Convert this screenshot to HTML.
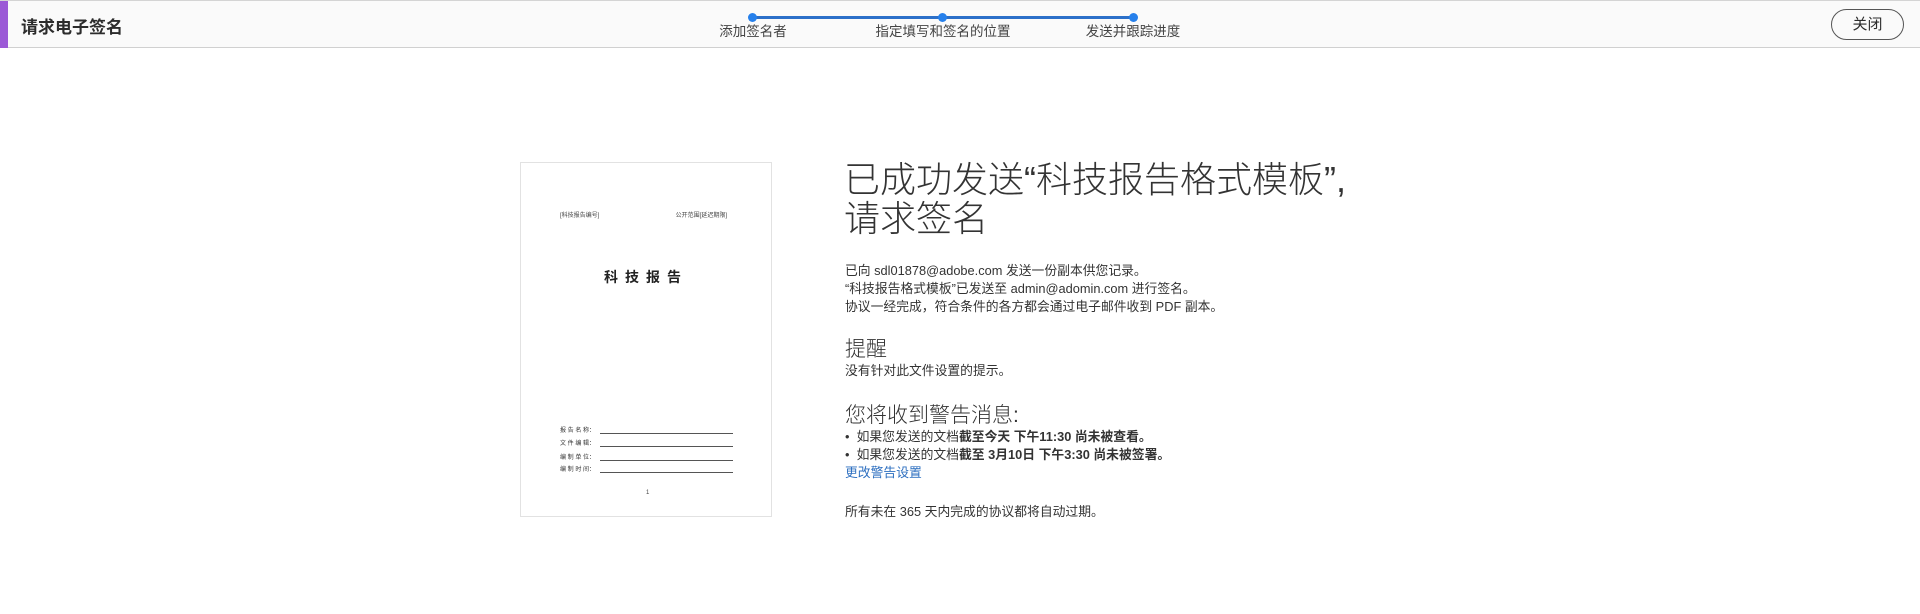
<!DOCTYPE html>
<html><head><meta charset="utf-8"><style>
*{margin:0;padding:0;box-sizing:border-box}
body{width:1920px;height:614px;background:#fff;font-family:"Liberation Sans","Noto Sans CJK SC",sans-serif;color:#333;position:relative;overflow:hidden}
.hdr{position:absolute;left:0;top:0;width:1920px;height:48px;background:#fafafa;border-top:1px solid #d4d4d4;border-bottom:1px solid #d0d0d0}
.bar{position:absolute;left:0;top:0;width:8px;height:47px;background:#9b59d6}
.ttl{position:absolute;left:21px;top:12px;font-size:17px;font-weight:bold;color:#2c2c2c}
.line{position:absolute;left:752px;top:15px;width:381px;height:3px;background:#2c70c9}
.dot{position:absolute;top:12px;width:9px;height:9px;border-radius:50%;background:#2680eb}
.lbl{position:absolute;top:19px;font-size:13.5px;color:#444;transform:translateX(-50%);white-space:nowrap}
.btn{position:absolute;left:1831px;top:8px;width:73px;height:31px;border:1.5px solid #555;border-radius:16px;font-size:15px;text-align:center;line-height:29px;color:#2c2c2c}
.doc{position:absolute;left:520px;top:162px;width:252px;height:355px;border:1px solid #e2e2e2;background:#fff}
.doc .s{position:absolute;font-size:6px;color:#444}
.doc .fl{position:absolute;left:39px;font-size:6px;color:#333;width:173px}
.doc .fl i{position:absolute;left:40px;right:0;bottom:0;border-bottom:1px solid #555}
.h1{position:absolute;left:844px;top:160px;font-size:36px;line-height:39px;font-weight:300;color:#333}
.p{position:absolute;left:845px;font-size:12.8px;line-height:18px;color:#333;white-space:nowrap}
.h2{position:absolute;left:845px;font-size:21px;font-weight:300;color:#333}
a{color:#2d6fc0;text-decoration:none}
</style></head><body>
<div class="hdr"><div class="bar"></div><div class="ttl">请求电子签名</div>
<div class="line"></div>
<div class="dot" style="left:748px"></div><div class="dot" style="left:938px"></div><div class="dot" style="left:1129px"></div>
<div class="lbl" style="left:753px">添加签名者</div>
<div class="lbl" style="left:943px">指定填写和签名的位置</div>
<div class="lbl" style="left:1133px">发送并跟踪进度</div>
<div class="btn">关闭</div></div>

<div class="doc">
<div class="s" style="left:39px;top:47px">[科技报告编号]</div>
<div class="s" style="right:44px;top:47px">公开范围[延迟期限]</div>
<div style="position:absolute;left:0;right:0;top:104px;text-align:center;font-size:14px;font-weight:bold;letter-spacing:7px;color:#222">科技报告</div>
<div class="fl" style="top:262px">报 告 名 称：<i></i></div>
<div class="fl" style="top:275px">文 件 编 辑：<i></i></div>
<div class="fl" style="top:289px">编 制 单 位：<i></i></div>
<div class="fl" style="top:301px">编 制 时 间：<i></i></div>
<div class="s" style="left:125px;top:327px">1</div>
</div>

<div class="h1">已成功发送“科技报告格式模板”,<br>请求签名</div>
<div class="p" style="top:262px">已向 sdl01878@adobe.com 发送一份副本供您记录。<br>“科技报告格式模板”已发送至 admin@adomin.com 进行签名。<br>协议一经完成，符合条件的各方都会通过电子邮件收到 PDF 副本。</div>
<div class="h2" style="top:333px">提醒</div>
<div class="p" style="top:362px">没有针对此文件设置的提示。</div>
<div class="h2" style="top:399px">您将收到警告消息:</div>
<div class="p" style="top:428px">•&nbsp; 如果您发送的文档<b>截至今天 下午11:30 尚未被查看。</b><br>•&nbsp; 如果您发送的文档<b>截至 3月10日 下午3:30 尚未被签署。</b><br><a>更改警告设置</a></div>
<div class="p" style="top:503px">所有未在 365 天内完成的协议都将自动过期。</div>
</body></html>
